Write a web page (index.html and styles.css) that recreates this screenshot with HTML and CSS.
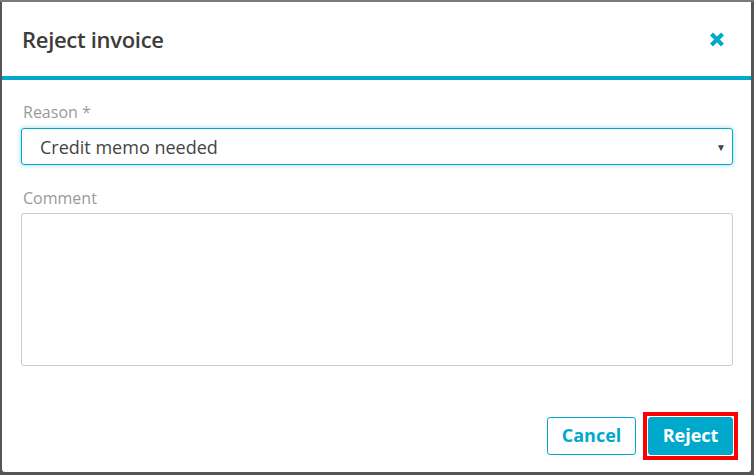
FILE: index.html
```html
<!DOCTYPE html>
<html>
<head>
<meta charset="utf-8">
<link rel="stylesheet" href="styles.css">
</head>
<body>
<div class="backdrop">
  <div class="modal">
    <div class="modal-header">
      <h1 class="modal-title">Reject invoice</h1>
      <button class="close-btn" aria-label="Close">
        <svg width="16" height="15" viewBox="0 0 16 15"><path d="M2.5 2 L13.5 13 M13.5 2 L2.5 13" stroke="#00a9cc" stroke-width="4" stroke-linecap="butt"/></svg>
      </button>
    </div>
    <div class="modal-body">
      <label class="field-label">Reason *</label>
      <div class="select">
        <span class="select-value">Credit memo needed</span>
        <span class="select-arrow">▼</span>
      </div>
      <label class="field-label comment-label">Comment</label>
      <div class="textarea"></div>
    </div>
    <div class="modal-footer">
      <button class="btn btn-outline">Cancel</button>
      <button class="btn btn-primary">Reject</button>
    </div>
  </div>
</div>
</body>
</html>
```
FILE: styles.css
```css
html, body {
  margin: 0;
  padding: 0;
}
body {
  background: #5c5c5c;
  font-family: "Open Sans", "Noto Sans", sans-serif;
  width: 754px;
  height: 475px;
  overflow: hidden;
}
.backdrop {
  padding: 2px 3px 3px 2px;
  background: linear-gradient(to bottom, #7a7a7a 0, #7a7a7a 2px, #555 2px);
  height: 470px;
}
.modal {
  background: #fff;
  width: 749px;
  height: 470px;
  border-radius: 0 0 3px 3px;
  display: flex;
  flex-direction: column;
}
.modal-header {
  height: 74px;
  border-bottom: 4px solid #00a9cc;
  display: flex;
  align-items: center;
  justify-content: space-between;
  padding: 0 26px 0 20px;
}
.modal-title {
  margin: 0;
  font-size: 22px;
  font-weight: 600;
  color: #3c3c3c;
  letter-spacing: -0.3px;
}
.close-btn {
  border: 0;
  background: none;
  padding: 0;
  width: 16px;
  height: 15px;
  display: flex;
}
.modal-body {
  padding: 20px 18px 0 19px;
  display: flex;
  flex-direction: column;
}
.field-label {
  font-size: 16px;
  line-height: 24px;
  color: #9a9a9a;
  padding-left: 2px;
  margin-bottom: 4px;
}
.comment-label {
  margin-top: 21px;
  margin-bottom: 3px;
}
.select {
  height: 37px;
  box-sizing: border-box;
  border: 1px solid #00a9cc;
  border-radius: 3px;
  box-shadow: 0 0 5px rgba(0, 169, 204, 0.45);
  display: flex;
  align-items: center;
  justify-content: space-between;
  padding: 0 6px 0 18px;
}
.select-value {
  font-size: 18px;
  color: #444;
}
.select-arrow {
  font-size: 10px;
  color: #444;
}
.textarea {
  height: 153px;
  box-sizing: border-box;
  border: 1px solid #ccc;
  border-radius: 3px;
}
.modal-footer {
  margin-top: auto;
  display: flex;
  justify-content: flex-end;
  gap: 12px;
  padding: 0 18px 17px 0;
}
.btn {
  height: 38px;
  box-sizing: border-box;
  border-radius: 3px;
  font-family: inherit;
  font-size: 18px;
  font-weight: 700;
  padding: 0 0 3px 0;
  display: flex;
  align-items: center;
  justify-content: center;
}
.btn-outline {
  width: 89px;
  background: #fff;
  border: 1px solid #00a9cc;
  color: #00a9cc;
}
.btn-primary {
  position: relative;
  width: 85px;
  background: #00a9cc;
  border: 1px solid #00a9cc;
  color: #fff;
}
.btn-primary::after {
  content: "";
  position: absolute;
  left: -6px;
  top: -6px;
  right: -6px;
  bottom: -6px;
  border: 4px solid #f00;
}
```
